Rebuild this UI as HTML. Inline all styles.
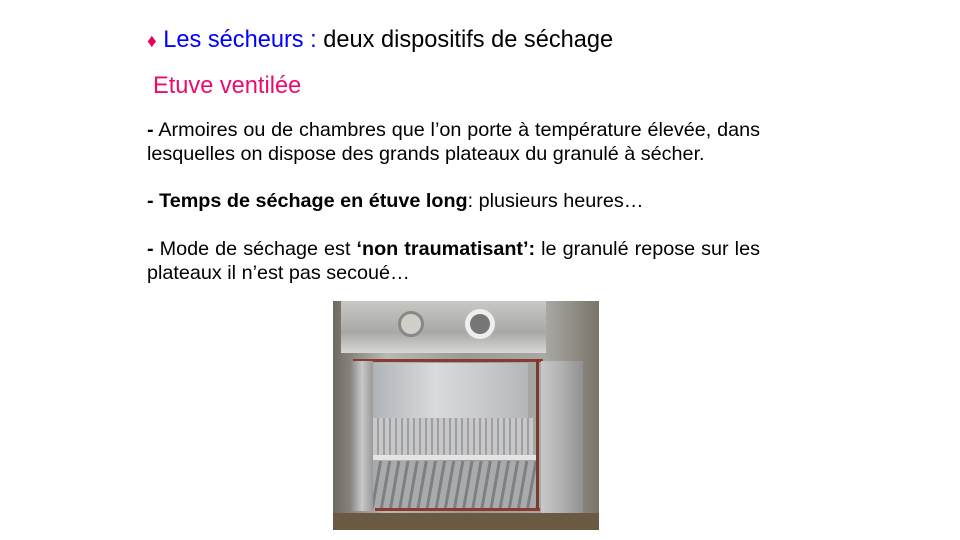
<!DOCTYPE html>
<html><head><meta charset="utf-8"><style>
html,body{margin:0;padding:0;background:#fff;width:960px;height:540px;overflow:hidden;position:relative;font-family:"Liberation Sans",Arial,sans-serif}
.t{position:absolute;white-space:nowrap}
.b{position:absolute;left:147px;width:613px;font-size:19.8px;line-height:24px;color:#000;text-align:justify;letter-spacing:0px}
.b p{margin:0;white-space:nowrap}
.j{text-align-last:justify;white-space:normal!important}
.ph{position:absolute;left:333px;top:301px;width:266px;height:229px;overflow:hidden;background:#8a8678}
.ph div{position:absolute}
</style></head><body>
<div class="t" style="left:147px;top:27px;font-size:23.6px"><span style="color:#e8005a;font-size:19px">♦</span> <span style="color:#0000ff">Les sécheurs :</span> deux dispositifs de séchage</div>
<div class="t" style="left:153px;top:73px;font-size:23.6px;color:#ee0b6e">Etuve ventilée</div>
<div class="b" style="top:118px"><p class="j"><b>-</b> Armoires ou de chambres que l’on porte à température élevée, dans</p><p>lesquelles on dispose des grands plateaux du granulé à sécher.</p></div>
<div class="b" style="top:189px"><p><b>- Temps de séchage en étuve long</b>: plusieurs heures…</p></div>
<div class="b" style="top:237px"><p class="j"><b>- </b>Mode de séchage est <b>‘non traumatisant’:</b> le granulé repose sur les</p><p>plateaux il n’est pas secoué…</p></div>
<div class="ph">
 <div style="left:0;top:0;width:266px;height:229px;background:linear-gradient(90deg,#6e6a60,#b8b8b4 20%,#9a9a96 50%,#a8a8a4 80%,#7a7468)"></div>
 <div style="left:8px;top:0;width:205px;height:52px;background:linear-gradient(180deg,#c8c8c4,#a8a8a6 60%,#d8d8d6)"></div>
 <div style="left:65px;top:10px;width:20px;height:20px;border-radius:50%;background:#d0d0c8;border:3px solid #888"></div>
 <div style="left:132px;top:8px;width:20px;height:20px;border-radius:50%;background:#777;border:5px solid #eee"></div>
 <div style="left:20px;top:58px;width:190px;height:3px;background:#8a3a30"></div>
 <div style="left:40px;top:62px;width:155px;height:55px;background:linear-gradient(90deg,#b0b4b8,#d8dadc 40%,#c8cacc 70%,#b4b6b8)"></div>
 <div style="left:40px;top:117px;width:160px;height:40px;background:repeating-linear-gradient(90deg,#c8c8c8 0 4px,#9ca0a4 4px 6px)"></div>
 <div style="left:38px;top:154px;width:168px;height:5px;background:#e4e4e4"></div>
 <div style="left:40px;top:160px;width:165px;height:48px;background:repeating-linear-gradient(100deg,#a8aaac 0 6px,#7c8084 6px 9px)"></div>
 <div style="left:42px;top:207px;width:165px;height:3px;background:#8a3a30"></div>
 <div style="left:18px;top:60px;width:22px;height:150px;background:linear-gradient(90deg,#888,#c8c8c8,#999)"></div>
 <div style="left:203px;top:58px;width:3px;height:150px;background:#7a3a30"></div>
 <div style="left:208px;top:60px;width:42px;height:169px;background:linear-gradient(90deg,#c8c8c8,#b0b0b0 50%,#909090)"></div>
 <div style="left:0;top:212px;width:266px;height:17px;background:#6a5a44"></div>
</div>
</body></html>
